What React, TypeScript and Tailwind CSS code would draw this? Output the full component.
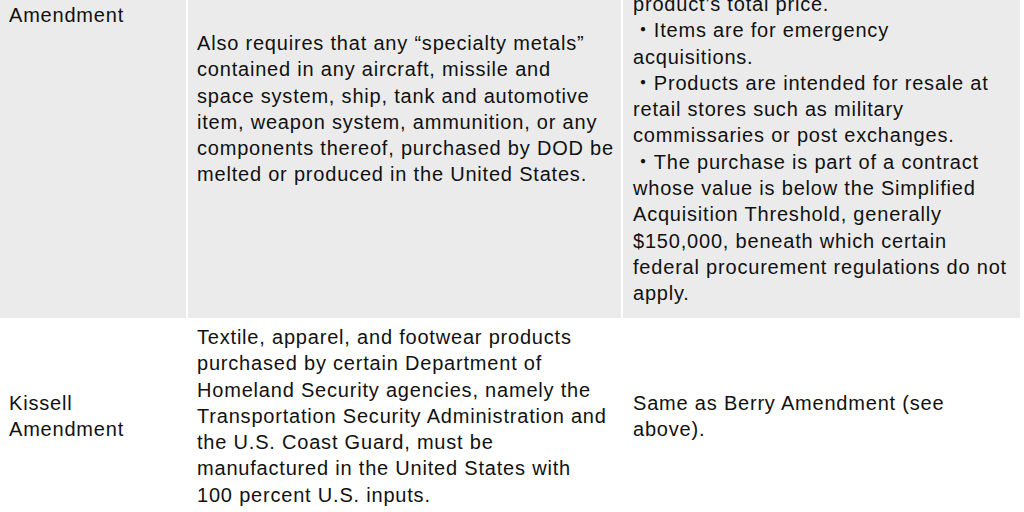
const berryReq = [
  "Also requires that any \u201cspecialty metals\u201d",
  "contained in any aircraft, missile and",
  "space system, ship, tank and automotive",
  "item, weapon system, ammunition, or any",
  "components thereof, purchased by DOD be",
  "melted or produced in the United States.",
];

const berryExceptions = [
  "product\u2019s total price.",
  "\u30fbItems are for emergency",
  "acquisitions.",
  "\u30fbProducts are intended for resale at",
  "retail stores such as military",
  "commissaries or post exchanges.",
  "\u30fbThe purchase is part of a contract",
  "whose value is below the Simplified",
  "Acquisition Threshold, generally",
  "$150,000, beneath which certain",
  "federal procurement regulations do not",
  "apply.",
];

const kissellReq = [
  "Textile, apparel, and footwear products",
  "purchased by certain Department of",
  "Homeland Security agencies, namely the",
  "Transportation Security Administration and",
  "the U.S. Coast Guard, must be",
  "manufactured in the United States with",
  "100 percent U.S. inputs.",
];

function Lines({ lines }: { lines: string[] }) {
  return (
    <>
      {lines.map((l, i) => (
        <span key={i} className="block whitespace-nowrap">
          {l}
        </span>
      ))}
    </>
  );
}

export default function App() {
  return (
    <div
      className="w-[1024px] h-[512px] overflow-hidden bg-white text-[#111111] text-[20px] leading-[26.3px] tracking-[0.8px]"
      style={{ fontFamily: '"Liberation Sans", Arial, "Noto Sans CJK JP", sans-serif' }}
    >
      <div className="-mt-[24px]">
        {/* Berry Amendment row */}
        <div className="grid grid-cols-[186px_433px_397px] gap-x-[2px] h-[342px] items-start">
          <div className="h-full bg-[#ebebeb] px-[9px]">
            <Lines lines={["Berry", "Amendment"]} />
          </div>
          <div className="h-full bg-[#ebebeb] px-[9px] pt-[54px]">
            <Lines lines={berryReq} />
          </div>
          <div className="h-full bg-[#ebebeb] px-[10px] pt-[15px]">
            <Lines lines={berryExceptions} />
          </div>
        </div>

        {/* Kissell Amendment row */}
        <div className="grid grid-cols-[186px_433px_397px] gap-x-[2px] items-center py-[6px]">
          <div className="px-[9px]">
            <Lines lines={["Kissell", "Amendment"]} />
          </div>
          <div className="px-[9px]">
            <Lines lines={kissellReq} />
          </div>
          <div className="px-[10px]">
            <Lines lines={["Same as Berry Amendment (see", "above)."]} />
          </div>
        </div>
      </div>
    </div>
  );
}
